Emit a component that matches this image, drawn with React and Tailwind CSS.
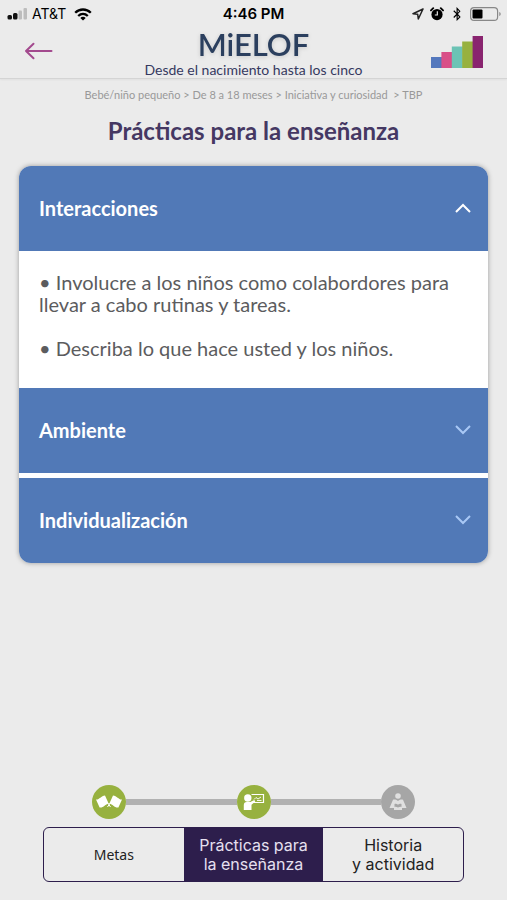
import React, { useState } from 'react';
import { FaBluetoothB } from 'react-icons/fa';

const SECTIONS = [
  {
    title: 'Interacciones',
    items: [
      'Involucre a los niños como colabordores para llevar a cabo rutinas y tareas.',
      'Describa lo que hace usted y los niños.',
    ],
  },
  { title: 'Ambiente', items: [] },
  { title: 'Individualización', items: [] },
];

function StatusBar() {
  return (
    <div className="grid grid-cols-3 items-center h-7 px-1.5 font-['Inter'] text-sm text-black">
      <div className="flex items-center gap-1">
        <svg width="22" height="12" viewBox="0 0 22 12" aria-hidden="true">
          <rect x="1.5" y="7" width="4.5" height="4.5" rx="1.5" fill="#111" />
          <rect x="7" y="5" width="4.5" height="6.5" rx="1.5" fill="#111" />
          <rect x="12.5" y="2.5" width="3.5" height="9" rx="1" fill="#bdbdbd" />
          <rect x="17.5" y="0" width="3.5" height="11.5" rx="1" fill="#bdbdbd" />
        </svg>
        <span>AT&amp;T</span>
        <svg className="ml-1" width="18" height="13" viewBox="0 0 18 13" fill="none" stroke="#000" strokeWidth="2.3" aria-hidden="true">
          <path d="M1.2 4.8C5.6.4 12.4.4 16.8 4.8" />
          <path d="M4.2 8C7 5.3 11 5.3 13.8 8" />
          <path d="M9 12.6 6.3 9.9c1.5-1.4 3.9-1.4 5.4 0z" fill="#000" stroke="none" />
        </svg>
      </div>
      <div className="text-center text-[15px] font-semibold whitespace-nowrap">4:46 PM</div>
      <div className="flex items-center justify-end gap-1.5">
        <svg width="12" height="12" viewBox="0 0 12 12" fill="none" stroke="#222" strokeWidth="1.5" strokeLinejoin="round" aria-hidden="true">
          <path d="M11 1 1 5.8l4.7.5L6.3 11z" />
        </svg>
        <svg width="14" height="14" viewBox="0 0 13 13" aria-hidden="true">
          <circle cx="6.5" cy="7" r="5.2" fill="#000" />
          <path d="M.9 3.2 3 1.1M12.1 3.2 10 1.1" stroke="#000" strokeWidth="1.7" strokeLinecap="round" />
          <path d="M6.8 4v3.4H4.5" fill="none" stroke="#e8e8e8" strokeWidth="1.1" />
        </svg>
        <FaBluetoothB size={14} aria-hidden="true" />
        <svg width="31" height="14" viewBox="0 0 31 14" aria-hidden="true">
          <rect x=".6" y=".6" width="27" height="12.8" rx="3.5" fill="none" stroke="#888" strokeWidth="1.2" />
          <rect x="2.5" y="2.5" width="10" height="9" rx="1" fill="#000" />
          <path d="M29.3 5v4c1.8-.6 1.8-3.4 0-4z" fill="#888" />
        </svg>
      </div>
    </div>
  );
}

function Header() {
  return (
    <header className="border-b border-[#d4d4d4] shadow-xs">
      <StatusBar />
      <div className="flex justify-between items-start h-[50px] px-6">
        <button type="button" aria-label="Atrás" className="w-14 pt-3.5">
          <svg width="29" height="18" viewBox="0 0 29 18" fill="none" stroke="#a34a8e" strokeWidth="2" strokeLinecap="round" strokeLinejoin="round">
            <path d="M27.5 9H2M9.5 1.8 2 9l7.5 7.2" />
          </svg>
        </button>
        <div className="flex flex-col items-center text-[#2b3f5e] whitespace-nowrap">
          <div className="text-[31px] leading-8 font-semibold drop-shadow-sm">MiELOF</div>
          <div className="text-sm text-[#35395f]">Desde el nacimiento hasta los cinco</div>
        </div>
        <div className="flex justify-end w-14 pt-2">
          <svg width="52" height="32" viewBox="0 0 52 32" aria-hidden="true">
            <rect x="0" y="21" width="11" height="11" fill="#5478bd" />
            <rect x="10.4" y="16" width="11" height="16" fill="#d94f88" />
            <rect x="20.8" y="10.5" width="11" height="21.5" fill="#6cc3b5" />
            <rect x="31.2" y="5.5" width="11" height="26.5" fill="#97b13f" />
            <rect x="41.6" y="0" width="10.4" height="32" fill="#89246f" />
          </svg>
        </div>
      </div>
    </header>
  );
}

function Section({ title, items, open, onToggle }) {
  return (
    <section>
      <h2>
        <button
          type="button"
          aria-expanded={open}
          onClick={onToggle}
          className="flex items-center justify-between w-full h-[85px] pl-5 pr-4 pb-0.5 bg-[#5179b7] text-xl font-bold text-white"
        >
          <span>{title}</span>
          <svg
            className={open ? 'text-white' : 'rotate-180 text-[#a9c8f5]'}
            width="18"
            height="12"
            viewBox="0 0 18 12"
            fill="none"
            stroke="currentColor"
            strokeWidth="2"
            aria-hidden="true"
          >
            <path d="M2 10 9 3l7 7" />
          </svg>
        </button>
      </h2>
      {open && items.length > 0 && (
        <ul className="flex flex-col gap-[22px] px-5 pt-5 pb-[29px] bg-white text-xl leading-[22px] text-[#5c5c5e]">
          {items.map((item) => (
            <li key={item}>• {item}</li>
          ))}
        </ul>
      )}
    </section>
  );
}

function StepIcon({ name }) {
  if (name === 'flags') {
    return (
      <svg width="28" height="22" viewBox="0 0 28 22" fill="#fff" aria-hidden="true">
        <path d="M1 8.5c3 .6 5-3.6 9-4l3.6 8c-3.400.8-5 4.500-9 4z" />
        <path d="M27 8.5c-3 .6-5-3.600-9-4l-3.600 8c3.400.8 5 4.500 9 4z" />
        <path d="m12.500 11.500 3 4.500M15.500 11.500l-3 4.500" stroke="#fff" />
      </svg>
    );
  }
  if (name === 'teacher') {
    return (
      <svg width="24" height="20" viewBox="0 0 24 20" aria-hidden="true">
        <path d="M9.5 2.5h12v8H11" fill="none" stroke="#fff" strokeWidth="1.2" />
        <path d="m12 7.5 2-2 2 1.5L19 5M15 8.5h4.5" fill="none" stroke="#fff" strokeWidth=".9" />
        <circle cx="5.8" cy="6" r="3.7" fill="#fff" />
        <path d="M1.8 18v-5c0-2 1-3 3-3h3.5l4-2 1 1.5-3.8 3.2V18z" fill="#fff" />
      </svg>
    );
  }
  return (
    <svg width="20" height="20" viewBox="0 0 20 20" fill="#e0e0e0" aria-hidden="true">
      <circle cx="10" cy="4" r="2.8" />
      <path d="M10 9C8 7.500 6.200 7.300 5 7.800L1.500 16H6v2h8v-2h4.500L15 7.800c-1.200-.5-3-.3-5 1.200z" />
      <path d="M10 15.500c-1.500-1-3-.8-3.500-.6v-3c1.500-.4 2.700 0 3.500.8.800-.8 2-1.200 3.500-.8v3c-.5-.2-2-.4-3.500.6z" fill="#a6a6a6" />
    </svg>
  );
}

function Stepper() {
  return (
    <div className="flex items-center px-[49px]">
      <div className="flex justify-center items-center size-[34px] rounded-full bg-[#97b13f]">
        <StepIcon name="flags" />
      </div>
      <div className="flex-1 h-1.5 bg-[#b1b1b1]" />
      <div className="flex justify-center items-center size-[34px] rounded-full bg-[#97b13f]">
        <StepIcon name="teacher" />
      </div>
      <div className="flex-1 h-1.5 bg-[#b1b1b1]" />
      <div className="flex justify-center items-center size-[34px] rounded-full bg-[#a6a6a6]">
        <StepIcon name="reader" />
      </div>
    </div>
  );
}

export default function App() {
  const [open, setOpen] = useState(0);

  return (
    <div className="flex flex-col min-h-screen bg-[#ebebeb] font-['Lato',sans-serif]">
      <Header />

      <nav className="mt-1.5 text-center text-[11px] leading-5 text-[#999]">
        Bebé/niño pequeño &gt; De 8 a 18 meses &gt; Iniciativa y curiosidad &nbsp;&gt; TBP
      </nav>
      <h1 className="mt-2.5 text-center text-2xl font-bold text-[#453863]">
        Prácticas para la enseñanza
      </h1>

      <main className="mx-[19px] mt-[19px] rounded-xl overflow-hidden bg-white shadow-[0_0_5px_rgba(0,0,0,0.35)]">
        {SECTIONS.map((s, i) => (
          <div key={s.title} className={i > 1 ? 'border-t-5 border-white' : ''}>
            <Section {...s} open={open === i} onToggle={() => setOpen(open === i ? -1 : i)} />
          </div>
        ))}
      </main>

      <footer className="mt-auto px-[43px] pb-[18px]">
        <Stepper />
        <div className="grid grid-cols-3 mt-2 h-[55px] rounded-md overflow-hidden border border-[#2d1e4c] font-['Inter'] text-base leading-[19px] text-[#222]">
          <button type="button" className="font-['Noto_Sans'] text-sm">Metas</button>
          <button type="button" aria-current="step" className="bg-[#2d1e4c] text-[#e6e0f0]">
            Prácticas para
            <br />
            la enseñanza
          </button>
          <button type="button">
            Historia
            <br />y actividad
          </button>
        </div>
      </footer>
    </div>
  );
}
